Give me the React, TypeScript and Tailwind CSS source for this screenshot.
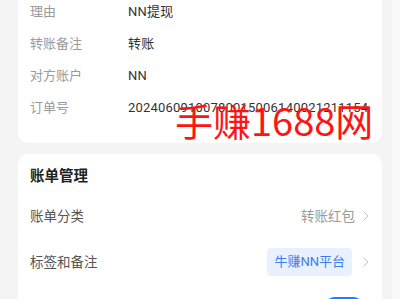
import React from 'react';
import { ChevronRight } from 'lucide-react';

const font = { fontFamily: '"Roboto", "Noto Sans CJK SC", sans-serif' };

const details = [
    { label: '理由', value: 'NN提现' },
    { label: '转账备注', value: '转账' },
    { label: '对方账户', value: 'NN' },
    { label: '订单号', value: '20240609100780015006140021211154' },
];

function Chevron() {
    return <ChevronRight className="w-4 h-4 text-[#bbbbbb]" strokeWidth={1.4} />;
}

export default function App() {
    return (
        <div className="relative w-[400px] h-[299px] overflow-hidden bg-[#f4f4f4] flex" style={font}>
            <div className="w-[392px] flex flex-col gap-[11px] pl-[18px] pr-[10px]">
                {/* 明细 */}
                <div className="-mt-[4px] bg-white rounded-b-[10px] pl-3 pr-3 pb-[19px]">
                    {details.map((row) => (
                        <div key={row.label} className="h-8 flex items-center text-[13px]">
                            <span className="w-[98px] shrink-0 text-[#9a9a9a]">{row.label}</span>
                            <span className="text-[#333333] whitespace-nowrap tracking-[0.2px]">{row.value}</span>
                        </div>
                    ))}
                </div>

                {/* 账单管理 */}
                <div className="bg-white rounded-[10px] pl-3 pr-2 pt-3 flex flex-col">
                    <div className="h-[22px] flex items-center text-[14.5px] font-bold text-[#222222]">账单管理</div>
                    <div className="mt-[5px] h-[46px] flex items-center justify-between text-[13.5px]">
                        <span className="text-[#555555]">账单分类</span>
                        <div className="flex items-center gap-[3px]">
                            <span className="text-[#9a9a9a]">转账红包</span>
                            <Chevron />
                        </div>
                    </div>
                    <div className="h-[46px] flex items-center justify-between text-[13.5px]">
                        <span className="text-[#555555]">标签和备注</span>
                        <div className="flex items-center gap-[6px]">
                            <span className="h-[28px] px-[7px] flex items-center rounded-[4px] bg-[#e9f1ff] text-[#3b7cf0] text-[13px]">牛赚NN平台</span>
                            <Chevron />
                        </div>
                    </div>
                    <div className="h-[46px] flex items-center justify-end">
                        <span className="w-[40px] h-[22px] rounded-full bg-[#1f7cff] mr-[10px]" />
                    </div>
                </div>
            </div>
            <div className="flex-1 bg-[#f9f9f9]" />

            {/* 水印 */}
            <div
                className="absolute left-[175px] top-[97px] text-[38px] leading-[46px] font-normal text-[#ff1414] whitespace-nowrap pointer-events-none"
                style={{ fontFamily: '"Noto Sans CJK SC", sans-serif' }}
            >
                手赚1688网
            </div>
        </div>
    );
}
